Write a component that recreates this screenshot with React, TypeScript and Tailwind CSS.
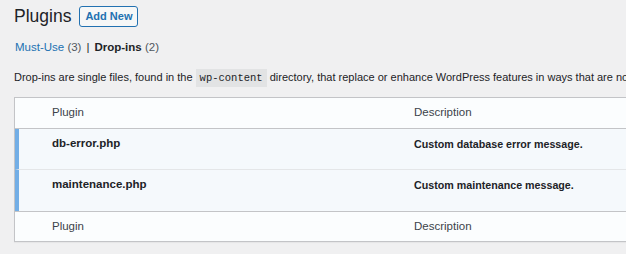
export default function App() {
  const rows = [
    { name: "db-error.php", desc: "Custom database error message." },
    { name: "maintenance.php", desc: "Custom maintenance message." },
  ];

  return (
    <div
      className="w-[626px] h-[254px] overflow-hidden bg-[#f0f0f1] text-[#3c434a] text-[11.5px]"
      style={{ fontFamily: "'Liberation Sans', Arial, sans-serif" }}
    >
      <div className="pl-[14px] pt-[4px] flex items-center gap-[8px]">
        <h1 className="text-[17.5px] leading-[24px] font-normal text-[#1d2327]">Plugins</h1>
        <button className="h-[21px] w-[59px] border border-[#2271b1] rounded-[3px] bg-[#f6f7f7] text-[#2271b1] text-[11px] font-bold leading-[19px]">
          Add New
        </button>
      </div>

      <ul className="flex items-center pl-[15px] mt-[11px] leading-[16px] text-[11.5px] text-[#50575e]">
        <li>
          <span className="text-[#2271b1]">Must-Use</span> (3)
          <span className="mx-[5px] text-[#1d2327]">|</span>
        </li>
        <li>
          <span className="font-bold text-[#1d2327]">Drop-ins</span> (2)
        </li>
      </ul>

      <p className="pl-[14px] mt-[13px] leading-[19px] whitespace-nowrap text-[#1d2327] text-[11px]">
        Drop-ins are single files, found in the{" "}
        <code
          className="bg-[#e2e3e4] px-[4px] py-[3px] text-[10.5px]"
          style={{ fontFamily: "'Liberation Mono', monospace" }}
        >
          wp-content
        </code>{" "}
        directory, that replace or enhance WordPress features in ways that are not possible for traditional plugins.
      </p>

      <div className="ml-[14px] mt-[9px] w-[680px] border border-[#c3c4c7] shadow-[0_1px_1px_rgba(0,0,0,0.04)]">
        <div className="flex h-[31px] items-center bg-[#fbfdfe] border-b border-[#c3c4c7]">
          <div className="w-[399px] pl-[37px]">Plugin</div>
          <div>Description</div>
        </div>
        {rows.map((r, i) => (
          <div
            key={r.name}
            className={`flex h-[41px] bg-[#f5f9fc] border-l-4 border-[#72aee6] ${
              i === 0 ? "border-b border-b-[#e4e6e8]" : ""
            }`}
          >
            <div className="w-[395px] pl-[33px] pt-[6px] font-bold text-[11.5px] text-[#1d2327]">{r.name}</div>
            <div className="pt-[7px] text-[10.7px] font-bold text-[#1d2327]">{r.desc}</div>
          </div>
        ))}
        <div className="flex h-[30px] items-center bg-[#fbfdfe] border-t border-[#c3c4c7]">
          <div className="w-[399px] pl-[37px]">Plugin</div>
          <div>Description</div>
        </div>
      </div>
    </div>
  );
}
